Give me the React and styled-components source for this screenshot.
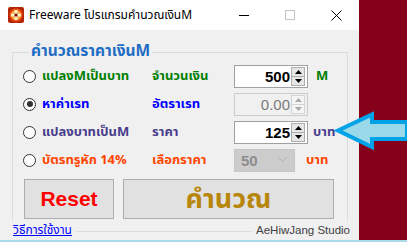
import styled, { createGlobalStyle } from "styled-components";

const GlobalStyle = createGlobalStyle`
  html, body { margin: 0; padding: 0; }
  body {
    width: 407px;
    height: 242px;
    overflow: hidden;
    background: #86001b;
    font-family: Tahoma, "Noto Sans Thai", "Noto Sans", "DejaVu Sans", sans-serif;
  }
`;

const thai = `Tahoma, "Noto Sans Thai", "Noto Sans", "DejaVu Sans", sans-serif`;

const rows = [
  { label: "แปลงMเป็นบาท", field: "จำนวนเงิน", value: "500", unit: "M", color: "#008000", unitGap: 8 },
  { label: "หาค่าเรท", field: "อัตราเรท", value: "0.00", color: "#0000ff", checked: true, disabled: true },
  { label: "แปลงบาทเป็นM", field: "ราคา", value: "125", unit: "บาท", color: "#483d8b", unitGap: 5 },
  { label: "บัตรทรูหัก 14%", field: "เลือกราคา", value: "50", unit: "บาท", color: "#ff4500", unitGap: 11, select: true },
];

export default function App() {
  return (
    <Page>
      <GlobalStyle />
      <Desk>
        <Window>
          <TitleBar>
            <AppIcon viewBox="0 0 16 16">
              <rect x="0" y="0" width="16" height="16" rx="2" fill="#b3260a" />
              <circle cx="8" cy="8" r="6.5" fill="#f25a12" />
              <circle cx="8" cy="8" r="4.5" fill="#ffd34a" />
              <circle cx="8" cy="8" r="3" fill="#c0140c" />
              <rect x="6.5" y="3" width="3" height="10" fill="#fff2c0" />
              <rect x="3" y="6.5" width="10" height="3" fill="#fff2c0" />
              <circle cx="8" cy="8" r="1.6" fill="#7a0a05" />
            </AppIcon>
            <Title>Freeware โปรแกรมคำนวณเงินM</Title>
            <Controls>
              <CtlBtn>
                <svg width="10" height="10" viewBox="0 0 10 10">
                  <line x1="0" y1="5.5" x2="10" y2="5.5" stroke="#000" strokeWidth="1" />
                </svg>
              </CtlBtn>
              <CtlBtn>
                <svg width="10" height="10" viewBox="0 0 10 10">
                  <rect x="0.5" y="0.5" width="9" height="9" fill="none" stroke="#c4c4c4" strokeWidth="1" />
                </svg>
              </CtlBtn>
              <CtlBtn>
                <svg width="11" height="11" viewBox="0 0 11 11">
                  <path d="M0.5 0.5 L10.5 10.5 M10.5 0.5 L0.5 10.5" stroke="#000" strokeWidth="1" />
                </svg>
              </CtlBtn>
            </Controls>
          </TitleBar>

          <Client>
            <GroupBox>
              <Legend>คำนวณราคาเงินM</Legend>
              <Grid>
                {rows.map((r) => (
                  <Row key={r.label}>
                    <Choice>
                      <Radio $checked={r.checked} />
                      <Label $color={r.color}>{r.label}</Label>
                    </Choice>
                    <Label $color={r.color}>{r.field}</Label>
                    <FieldCell $gap={r.unitGap || 0}>
                      {r.select ? (
                        <Select>
                          <span>{r.value}</span>
                          <svg width="9" height="6" viewBox="0 0 9 6">
                            <path d="M0.5 0.5 L4.5 4.5 L8.5 0.5" fill="none" stroke="#b0b0b0" strokeWidth="1" />
                          </svg>
                        </Select>
                      ) : (
                        <Numeric $disabled={r.disabled}>
                          <NumText $disabled={r.disabled}>{r.value}</NumText>
                          <Spin $disabled={r.disabled}>
                            <SpinHalf $disabled={r.disabled}>
                              <svg width="7" height="4" viewBox="0 0 7 4">
                                <path d="M3.5 0 L7 4 L0 4 Z" fill={r.disabled ? "#a8a8a8" : "#000"} />
                              </svg>
                            </SpinHalf>
                            <SpinHalf $disabled={r.disabled}>
                              <svg width="7" height="4" viewBox="0 0 7 4">
                                <path d="M0 0 L7 0 L3.5 4 Z" fill={r.disabled ? "#a8a8a8" : "#000"} />
                              </svg>
                            </SpinHalf>
                          </Spin>
                        </Numeric>
                      )}
                      {r.unit && <Label $color={r.color}>{r.unit}</Label>}
                    </FieldCell>
                  </Row>
                ))}
              </Grid>
              <Buttons>
                <Button $w={90} $color="#ff0000" $size={21} $font='"Liberation Sans", Arial, sans-serif'>
                  Reset
                </Button>
                <Button $w={211} $color="#b8860b" $size={27} $font={thai}>
                  คำนวณ
                </Button>
              </Buttons>
            </GroupBox>
            <Footer>
              <HelpLink href="#">วิธีการใช้งาน</HelpLink>
              <Rule />
              <Studio>AeHiwJang Studio</Studio>
            </Footer>
          </Client>
        </Window>
      </Desk>
      <Taskbar />

      <Pointer width="71" height="38" viewBox="0 0 71 38">
        <path
          d="M2 18.5 L36 2.5 L36 10 L71 10 L71 27 L36 27 L36 35 Z"
          fill="#99d9ea"
          stroke="#00a2e8"
          strokeWidth="4"
          strokeLinejoin="miter"
        />
      </Pointer>
    </Page>
  );
}

const Page = styled.div`
  position: relative;
  width: 407px;
  height: 242px;
  display: flex;
  flex-direction: column;
`;

const Desk = styled.div`
  height: 240px;
  display: flex;
  background: #86001b;
`;

const Taskbar = styled.div`
  height: 2px;
  background: #a9dbe8;
`;

const Window = styled.div`
  width: 359px;
  display: flex;
  flex-direction: column;
  background: #f0f0f0;
`;

const TitleBar = styled.div`
  height: 30px;
  background: #ffffff;
  display: flex;
  align-items: center;
  padding-left: 8px;
`;

const AppIcon = styled.svg`
  width: 16px;
  height: 16px;
  flex: none;
`;

const Title = styled.div`
  margin-left: 5px;
  font-family: "Noto Sans", ${thai};
  font-size: 12px;
  color: #000;
  flex: 1;
  white-space: nowrap;
`;

const Controls = styled.div`
  display: flex;
  height: 100%;
`;

const CtlBtn = styled.div`
  width: 46px;
  height: 30px;
  display: flex;
  align-items: center;
  justify-content: center;
`;

const Client = styled.div`
  flex: 1;
  display: flex;
  flex-direction: column;
  padding: 12px 9px 0 12px;
`;

const GroupBox = styled.fieldset`
  margin: 0;
  width: 336px;
  box-sizing: border-box;
  min-width: 0;
  border: 1px solid #dcdcdc;
  border-bottom: none;
  padding: 0 0 2px 10px;
`;

const Legend = styled.legend`
  padding: 0 2px;
  margin-left: 6px;
  font-family: ${thai};
  font-weight: bold;
  font-size: 15.5px;
  line-height: 20px;
  color: #1d6dc4;
`;

const Grid = styled.div`
  display: flex;
  flex-direction: column;
`;

const Row = styled.div`
  height: 28px;
  display: grid;
  grid-template-columns: 129px 82px 1fr;
  align-items: center;
`;

const Choice = styled.div`
  display: flex;
  align-items: center;
  gap: 6px;
`;

const Radio = styled.span`
  width: 13px;
  height: 13px;
  border-radius: 50%;
  border: 1px solid #333;
  background: #fff;
  box-sizing: border-box;
  position: relative;
  flex: none;
  &::after {
    content: "";
    display: ${(p) => (p.$checked ? "block" : "none")};
    position: absolute;
    left: 2.5px;
    top: 2.5px;
    width: 6px;
    height: 6px;
    border-radius: 50%;
    background: #333;
  }
`;

const Label = styled.span`
  font-family: ${thai};
  font-weight: bold;
  font-size: 13px;
  color: ${(p) => p.$color};
  white-space: nowrap;
`;

const FieldCell = styled.div`
  display: flex;
  align-items: center;
  gap: ${(p) => p.$gap}px;
`;

const Numeric = styled.div`
  width: 74px;
  height: 23px;
  box-sizing: border-box;
  border: 1px solid ${(p) => (p.$disabled ? "#cccccc" : "#a0a0a0")};
  background: ${(p) => (p.$disabled ? "#f0f0f0" : "#ffffff")};
  display: flex;
  align-items: center;
  padding: 1px 2px 1px 0;
`;

const NumText = styled.div`
  flex: 1;
  text-align: right;
  padding-right: 1px;
  font-family: "Liberation Sans", Arial, sans-serif;
  font-weight: ${(p) => (p.$disabled ? "normal" : "bold")};
  font-size: 15px;
  color: ${(p) => (p.$disabled ? "#7a7a7a" : "#000000")};
`;

const Spin = styled.div`
  width: 14px;
  height: 19px;
  display: flex;
  flex-direction: column;
`;

const SpinHalf = styled.div`
  flex: 1;
  display: flex;
  align-items: center;
  justify-content: center;
  box-sizing: border-box;
  border: 1px solid ${(p) => (p.$disabled ? "#d4d4d4" : "#adadad")};
  background: ${(p) => (p.$disabled ? "#f4f4f4" : "#e6e6e6")};
  & + & { border-top: none; }
`;

const Select = styled.div`
  width: 61px;
  height: 23px;
  box-sizing: border-box;
  border: 1px solid #c6c6c6;
  background: #cccccc;
  display: flex;
  align-items: center;
  justify-content: space-between;
  padding: 0 7px 0 6px;
  font-family: "Liberation Sans", Arial, sans-serif;
  font-weight: bold;
  font-size: 15px;
  color: #8d8d8d;
`;

const Buttons = styled.div`
  display: flex;
  gap: 9px;
  margin-top: 5px;
  padding-left: 1px;
`;

const Button = styled.button`
  width: ${(p) => p.$w}px;
  height: 40px;
  border: 1px solid #adadad;
  background: #e1e1e1;
  color: ${(p) => p.$color};
  font-family: ${(p) => p.$font};
  font-weight: bold;
  font-size: ${(p) => p.$size}px;
  padding: 0;
  display: flex;
  align-items: center;
  justify-content: center;
`;

const Footer = styled.div`
  height: 17px;
  display: flex;
  align-items: center;
  margin-left: 1px;
`;

const HelpLink = styled.a`
  font-family: ${thai};
  font-size: 12px;
  color: #0000ff;
  text-decoration: underline;
  white-space: nowrap;
`;

const Rule = styled.div`
  flex: 1;
  height: 1px;
  background: #dcdcdc;
  margin: 4px 4px 0 4px;
`;

const Studio = styled.span`
  font-family: "Liberation Sans", Arial, sans-serif;
  font-size: 11.5px;
  color: #404040;
  white-space: nowrap;
`;

const Pointer = styled.svg`
  position: absolute;
  left: 336px;
  top: 112px;
  overflow: visible;
`;
